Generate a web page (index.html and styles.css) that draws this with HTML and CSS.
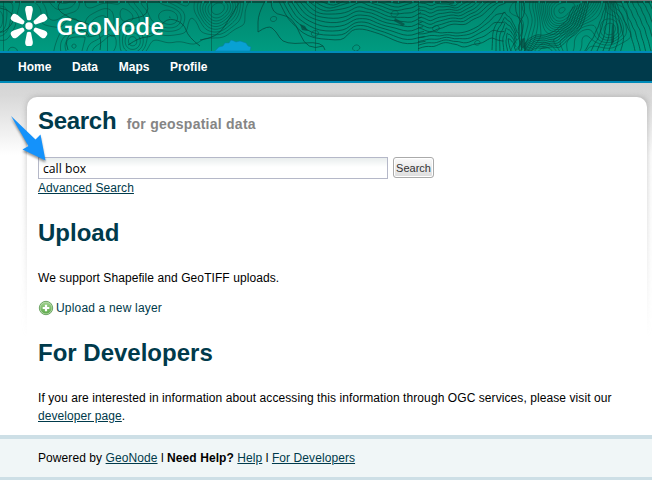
FILE: index.html
```html
<!DOCTYPE html>
<html lang="en">
<head>
<meta charset="utf-8">
<title>GeoNode</title>
<link rel="stylesheet" href="styles.css">
</head>
<body>
<header class="banner">
  <svg class="contours" viewBox="0 1 652 50" preserveAspectRatio="none" aria-hidden="true">
    <g class="fine" id="contour-lines"></g>
    <g class="bold">
      <path d="M0 8Q8 9 12 14T10 26T0 32M62 1Q54 7 62 13T82 22T98 32T100 50M89 36Q85 27 74 32T68 50M108 34Q115 40 118 30T136 18T147 3M128 45Q140 37 147 37T160 27T175 20T186 30T200 46M200 40Q217 38 224 27T239 3"/>
      <path d="M265 1Q258 14 258 22T258 32Q268 25 272 28T280 38T304 43T325 50M271 1Q271 14 282 15T300 34T323 46"/>
      <path d="M523 1Q527 12 521 20T522 50M516 1Q514 12 520 20T518 50" />
    </g>
    <g id="slope-lines"></g>
    <path class="dark-area" d="M300 24l5 2 3 5-6-1zM395 18l10 6-2 2-9-5zM521 39l4-1 1 12-5-3zM610 17l3 9 1 16-3 3 1-22z"/>
    <path class="tile-seam" d="M3.500 1v50M107.500 1v50M211.500 1v50M315.500 1v50M418.500 1v50M519.500 1v50M521.500 1v50"/>
    <path class="dark-band" d="M0 2h652"/>
    <path class="lake" d="M215 51l4-4 4-1 2-3 4 0 2-3 3 1 2 1 4-1 6 2 2 3 3 1-1 4z"/>
  </svg>
  <div class="brand">
    <svg class="flower" viewBox="-19 -20 38 40" width="38" height="40" aria-hidden="true">
      <g fill="#fff">
        <circle r="3.700"/>
        <path id="petal" d="M-2-6.500L-3.800-15.700C-4.200-21-.8-20 0-20S4.200-21 3.800-15.700L2-6.500Q0-4.800-2-6.500z"/>
        <use href="#petal" transform="rotate(60)"/>
        <use href="#petal" transform="rotate(120)"/>
        <use href="#petal" transform="rotate(180)"/>
        <use href="#petal" transform="rotate(240)"/>
        <use href="#petal" transform="rotate(300)"/>
      </g>
    </svg>
    <span class="brand-name">GeoNode</span>
  </div>
</header>
<nav class="nav"><a>Home</a><a>Data</a><a>Maps</a><a>Profile</a></nav>
<main class="page">
  <section class="panel">
    <h1 class="search-title">Search <small>for geospatial data</small></h1>
    <form class="search">
      <input type="text" value="call box" aria-label="Search">
      <button type="button">Search</button>
    </form>
    <p class="advanced"><a class="link">Advanced Search</a></p>
    <h1 class="upload-title">Upload</h1>
    <p class="support">We support Shapefile and GeoTIFF uploads.</p>
    <p class="add">
      <svg width="16" height="16" viewBox="0 0 16 16" aria-hidden="true">
        <defs><linearGradient id="green" x2="0" y2="1"><stop stop-color="#9fd08c"/><stop offset="1" stop-color="#5faa4c"/></linearGradient></defs>
        <circle cx="8" cy="8" r="6.700" fill="#b9dcae" stroke="#6ea565"/>
        <circle cx="8" cy="8" r="5.600" fill="url(#green)"/>
        <path d="M8 4.700v6.600M4.700 8h6.600" stroke="#fff" stroke-width="2.200"/>
      </svg>
      <a>Upload a new layer</a>
    </p>
    <h1 class="dev-title">For Developers</h1>
    <p class="dev">If you are interested in information about accessing this information through OGC services, please visit our <a class="link">developer page</a>.</p>
  </section>
  <svg class="arrow" viewBox="0 0 44 52" width="44" height="52" aria-hidden="true">
    <path d="M5 5L29.500 28.500 34.500 23.500 39.500 49.500 16.500 38.500 22.500 35z" fill="#1492fb"/>
  </svg>
</main>
<footer class="footer">Powered by <a class="link">GeoNode</a> l <b>Need Help?</b> <a class="link">Help</a> l <a class="link">For Developers</a></footer>
<script src="contours.js"></script>
</body>
</html>
```
FILE: styles.css
```css
* { box-sizing: border-box; }
body {
  margin: 0;
  width: 652px;
  height: 480px;
  overflow: hidden;
  display: flex;
  flex-direction: column;
  background: #fff;
  color: #000;
  font: 12px/18px "Liberation Sans", Arial, sans-serif;
}
p, h1 { margin: 0; }
p, .footer { letter-spacing: .08px; }
.add { letter-spacing: .18px; }
a { color: #003a4b; }
.banner {
  position: relative;
  height: 53px;
  flex: none;
  border-top: 1px solid #777;
  border-bottom: 2px solid #008bb9;
  background: linear-gradient(#00856d, #009b80);
}
.contours { position: absolute; inset: 0; width: 652px; height: 50px; }
.contours path { fill: none; }
.fine path { stroke: #045a4b; stroke-width: .9; opacity: .75; }
.bold path { stroke: #064a3e; stroke-width: 1; opacity: .75; }
#slope-lines path { stroke: #04493d; stroke-width: 1; opacity: .75; }
.contours .tile-seam { stroke: #06473c; opacity: .5; }
.contours .dark-band { stroke: #063c31; stroke-width: 2; opacity: .7; stroke-dasharray: 13 2 5 1; }
.contours .dark-area { fill: #06483e; opacity: .7; }
.contours .lake { fill: #08a1d3; stroke: #087ea5; stroke-width: .5; }
.brand { position: relative; display: flex; align-items: center; padding: 5px 0 0 10px; height: 45px; }
.brand-name { margin: 0 0 0 8px; color: #fff; font: 600 24px/34px "Open Sans", sans-serif; }
.nav {
  display: flex;
  gap: 20.7px;
  flex: none;
  height: 30px;
  padding-left: 18px;
  border-bottom: 2px solid #008bb9;
  background: #003a4b;
  font-weight: bold;
  line-height: 28px;
}
.nav a { color: #fff; }
.page {
  position: relative;
  z-index: 0;
  height: 352px;
  flex: none;
  padding: 14px 5px 0 27px;
  background: linear-gradient(#d5d5d5, #d8d8d8 12px, #fff 72px);
}
.panel { position: relative; height: 338px; padding: 8px 11px 0; border-radius: 10px 10px 0 0; background: #fff; }
.panel::before {
  content: "";
  position: absolute;
  inset: -10px -5px 0 -10px;
  z-index: -1;
  border: 10px solid transparent;
  border-width: 10px 5px 0 10px;
  border-radius: 20px 15px 0 0;
  background: linear-gradient(#aaa, #aaa) padding-box;
  filter: blur(3px);
  -webkit-mask: linear-gradient(#000, transparent 250px);
  mask: linear-gradient(#000, transparent 250px);
}
h1 { font-size: 24px; line-height: 32px; color: #003a4b; }
.search-title { letter-spacing: -.3px; }
small { margin-left: 4px; color: #858585; font-size: 14px; letter-spacing: .25px; }
.search { display: flex; gap: 5px; margin: 17px 0 0; }
input {
  width: 350px;
  height: 22px;
  padding: 1px 4px;
  border: 1px solid #b5b8c8;
  background: linear-gradient(#e8eded, #fff 9px);
  color: #000;
  font: 12.2px "Open Sans", sans-serif;
}
button {
  width: 41px;
  height: 21px;
  padding: 0;
  border: 1px solid #aaa;
  border-radius: 3px;
  box-shadow: inset 0 0 0 1px #fff;
  background: linear-gradient(#fafafa, #ddd);
  color: #333;
  font: 11px "Liberation Sans", sans-serif;
}
.upload-title { margin-top: 20px; }
.support { margin-top: 20px; }
.add { display: flex; align-items: center; gap: 2px; margin-top: 12px; }
.dev-title { margin-top: 20px; }
.dev { margin-top: 20px; }
.link { text-decoration: underline; }
.arrow { position: absolute; left: 6px; top: 28px; filter: drop-shadow(0 2px 1px rgba(0, 0, 0, .4)); }
.footer {
  position: relative;
  z-index: 1;
  height: 45px;
  flex: none;
  padding: 10px 38px;
  border-top: 4px solid #cddfe6;
  border-bottom: 3px solid #cddfe6;
  background: #f0f6f7;
}
```
FILE: contours.js
```js
// Draws level curves of a small terrain model behind the banner.
const peaks = [[-5, 20, 18, 3], [60, -8, 22, 3], [75, 48, 20, 2], [100, 22, 15, 2], [132, 40, 14, 3], [150, 4, 18, 3], [172, 22, 16, 3],
  [217, 8, 20, 6], [560, 10, 24, 9], [545, 60, 22, 6], [590, 0, 18, 5], [611, 30, 14, 4]];
const height = (x, y) => {
  let h = Math.sin(x / 9 + y / 8) * .3 + Math.sin(x / 5 - y / 7) * .15 + Math.sin(y / 4 + x / 17) * .12;
  for (const [px, py, r, a] of peaks) h += a * Math.exp(-((x - px) ** 2 + (y - py) ** 2) / (r * r));
  return h;
};
const addPath = (id, d) => {
  const path = document.createElementNS("http://www.w3.org/2000/svg", "path");
  path.setAttribute("d", d);
  document.getElementById(id).appendChild(path);
};
const step = 2;
for (let level = .5; level < 11; level += .62) {
  let d = "";
  for (let x = 0; x < 652; x += step) for (let y = 1; y < 51; y += step) {
    const c = [[x, y], [x + step, y], [x + step, y + step], [x, y + step]];
    const h = c.map(p => height(p[0], p[1]));
    const cuts = [];
    for (let i = 0; i < 4; i++) {
      const j = (i + 1) % 4;
      if ((h[i] < level) !== (h[j] < level)) {
        const t = (level - h[i]) / (h[j] - h[i]);
        cuts.push((c[i][0] + t * (c[j][0] - c[i][0])).toFixed(1) + " " + (c[i][1] + t * (c[j][1] - c[i][1])).toFixed(1));
      }
    }
    for (let i = 0; i + 1 < cuts.length; i += 2) d += "M" + cuts[i] + "L" + cuts[i + 1];
  }
  addPath("contour-lines", d);
}

// Parallel slopes: curves blended between an upper and a lower ridge line.
const slopes = [
  [11, [[312, -6], [326, 1], [340, 2], [352, -8], [366, -10], [378, -1], [396, 4], [410, 0], [420, -8]],
    [[276, -4], [290, 22], [306, 36], [340, 42], [352, 30], [368, 29], [388, 38], [410, 45], [430, 40]]],
  [9, [[418, -2], [430, 2], [440, 0], [452, 4], [462, -3], [474, -8]],
    [[418, 28], [432, 32], [448, 25], [466, 24], [482, 15], [498, 2], [506, -4]]],
  [5, [[418, 34], [435, 32], [450, 33], [468, 32], [484, 22], [496, 8], [508, 1]],
    [[418, 48], [434, 46], [448, 42], [462, 47], [478, 44], [492, 38], [506, 42]]],
  [6, [[492, 50], [493, 30], [504, 12], [512, 20], [518, 34]], [[512, 54], [509, 45], [508, 38], [513, 42], [516, 52]]],
  [7, [[584, 52], [594, 36], [600, 22], [604, 10], [608, -2]], [[620, 54], [624, 38], [620, 22], [616, 10], [614, -2]]],
  [7, [[614, -2], [622, 16], [630, 32], [636, 54]], [[646, -2], [652, 8], [660, 28], [668, 54]]],
  [8, [[524, 44], [532, 36], [550, 34], [566, 22], [574, 4]], [[524, 52], [538, 48], [560, 47], [582, 28], [590, -2]]]
];
const pointAt = (line, t) => {
  const s = Math.min(t * (line.length - 1), line.length - 1.001);
  const i = Math.floor(s), f = s - i;
  return [0, 1].map(k => line[i][k] * (1 - f) + line[i + 1][k] * f);
};
for (const [count, upper, lower] of slopes) {
  for (let n = 0; n < count; n++) {
    const mix = n / (count - 1);
    const points = [];
    for (let i = 0; i <= 18; i++) {
      const a = pointAt(upper, i / 18), b = pointAt(lower, i / 18);
      points.push([a[0] * (1 - mix) + b[0] * mix, a[1] * (1 - mix) + b[1] * mix + Math.sin(i * 1.9 + n * .5) * .8]);
    }
    let d = "M" + points[0];
    for (let i = 1; i < 18; i++) d += "Q" + points[i] + " " + [0, 1].map(k => (points[i][k] + points[i + 1][k]) / 2);
    addPath("slope-lines", d);
  }
}
```
